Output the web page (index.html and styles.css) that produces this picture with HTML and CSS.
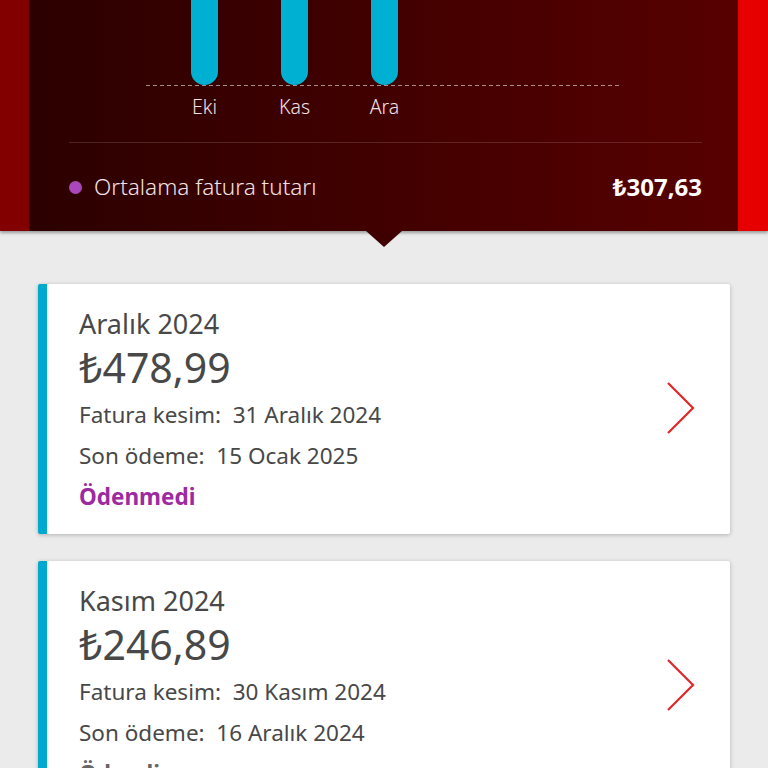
FILE: index.html
```html
<!DOCTYPE html>
<html lang="tr">

<head>
    <meta charset="UTF-8">
    <meta name="viewport" content="width=device-width, initial-scale=1.0">
    <title>Faturalarım</title>
    <link rel="stylesheet" href="styles.css">
</head>

<body>
    <header class="summary">
        <div class="edge edge-left"></div>
        <div class="panel">
            <div class="chart">
                <div class="plot">
                    <div class="bar"></div>
                    <div class="bar"></div>
                    <div class="bar"></div>
                </div>
                <div class="months">
                    <span>Eki</span>
                    <span>Kas</span>
                    <span>Ara</span>
                </div>
            </div>
            <div class="legend">
                <span class="legend-dot"></span>
                <span class="legend-label">Ortalama fatura tutarı</span>
                <span class="legend-value">₺307,63</span>
            </div>
        </div>
        <div class="edge edge-right"></div>
    </header>

    <main class="bills">
        <div class="bill-card">
            <div class="bill-info">
                <div class="bill-month">Aralık 2024</div>
                <div class="bill-amount">₺478,99</div>
                <div class="bill-line first">Fatura kesim:&nbsp; 31 Aralık 2024</div>
                <div class="bill-line">Son ödeme:&nbsp; 15 Ocak 2025</div>
                <div class="bill-status unpaid">Ödenmedi</div>
            </div>
            <svg class="chevron" width="30" height="52" viewBox="0 0 30 52">
                <polyline points="2,1 27,26 2,51" fill="none" stroke="#e0282b" stroke-width="2.2" />
            </svg>
        </div>

        <div class="bill-card">
            <div class="bill-info">
                <div class="bill-month">Kasım 2024</div>
                <div class="bill-amount">₺246,89</div>
                <div class="bill-line first">Fatura kesim:&nbsp; 30 Kasım 2024</div>
                <div class="bill-line">Son ödeme:&nbsp; 16 Aralık 2024</div>
                <div class="bill-status">Ödendi</div>
            </div>
            <svg class="chevron" width="30" height="52" viewBox="0 0 30 52">
                <polyline points="2,1 27,26 2,51" fill="none" stroke="#e0282b" stroke-width="2.2" />
            </svg>
        </div>
    </main>
</body>

</html>
```

FILE: styles.css
```css
body {
  margin: 0px;
  background-color: #ebebeb;
  font-family: 'Noto Sans', 'Open Sans', Arial, sans-serif;
  color: #484848;
}

/* header with the chart */
.summary {
  position: relative;
  display: flex;
  height: 231px;
  box-shadow: 0 2px 3px rgba(0, 0, 0, 0.35);
}

.summary::after {
  content: "";
  position: absolute;
  left: 366px;
  bottom: -16px;
  border-left: 18px solid transparent;
  border-right: 18px solid transparent;
  border-top: 16px solid #3e0000;
}

.edge {
  width: 29px;
}

.edge-left {
  background-color: #820000;
}

.edge-right {
  width: 30px;
  background-color: #e60000;
}

.panel {
  flex: 1;
  padding: 0px 38px 0px 40px;
  background: linear-gradient(to right, #2c0000, #570000);
  color: #f4e2e2;
  font-weight: 300;
}

.chart {
  margin-left: 77px;
  width: 474px;
}

.plot {
  height: 86px;
  display: flex;
  gap: 63px;
  padding-left: 45px;
  background: repeating-linear-gradient(to right, rgba(255, 255, 255, 0.55) 0 4px, transparent 4px 7px) left bottom / 100% 1px no-repeat;
}

.bar {
  width: 27px;
  height: 85px;
  background-color: #00b0d2;
  border-radius: 0 0 14px 14px;
}

.months {
  display: flex;
  gap: 63px;
  padding-left: 45px;
  margin-top: 8px;
  line-height: 26px;
  font-size: 19.5px;
}

.months span {
  width: 27px;
  display: flex;
  justify-content: center;
}

.legend {
  display: flex;
  align-items: center;
  margin-top: 22px;
  margin-right: -2px;
  padding-top: 29px;
  border-top: 1px solid rgba(255, 255, 255, 0.14);
  line-height: 30px;
  font-size: 22.5px;
}

.legend-dot {
  width: 13px;
  height: 13px;
  border-radius: 50%;
  background-color: #ab47bc;
  margin-right: 12px;
}

.legend-label {
  flex: 1;
}

.legend-value {
  font-size: 24px;
  font-weight: 700;
  color: #ffffff;
}

/* bill list */
.bills {
  display: flex;
  flex-direction: column;
  gap: 27px;
  padding: 53px 38px 0px 38px;
}

.bill-card {
  display: flex;
  align-items: center;
  background-color: #ffffff;
  border-left: 9px solid #00a9ce;
  border-radius: 2px;
  padding: 22px 34px 17px 32px;
  box-shadow: 0 1px 4px rgba(0, 0, 0, 0.25);
}

.bill-info {
  flex: 1;
}

.bill-month {
  font-size: 27px;
  line-height: 35px;
}

.bill-amount {
  font-size: 41px;
  line-height: 52px;
}

.bill-line {
  font-size: 22.5px;
  line-height: 41px;
}

.bill-line.first {
  margin-top: 1px;
}

.bill-status {
  font-size: 22.5px;
  line-height: 41px;
  font-weight: 700;
  color: #666666;
}

.bill-status.unpaid {
  color: #9c2aa0;
}

.chevron {
  display: block;
  margin-bottom: 7px;
}
```
